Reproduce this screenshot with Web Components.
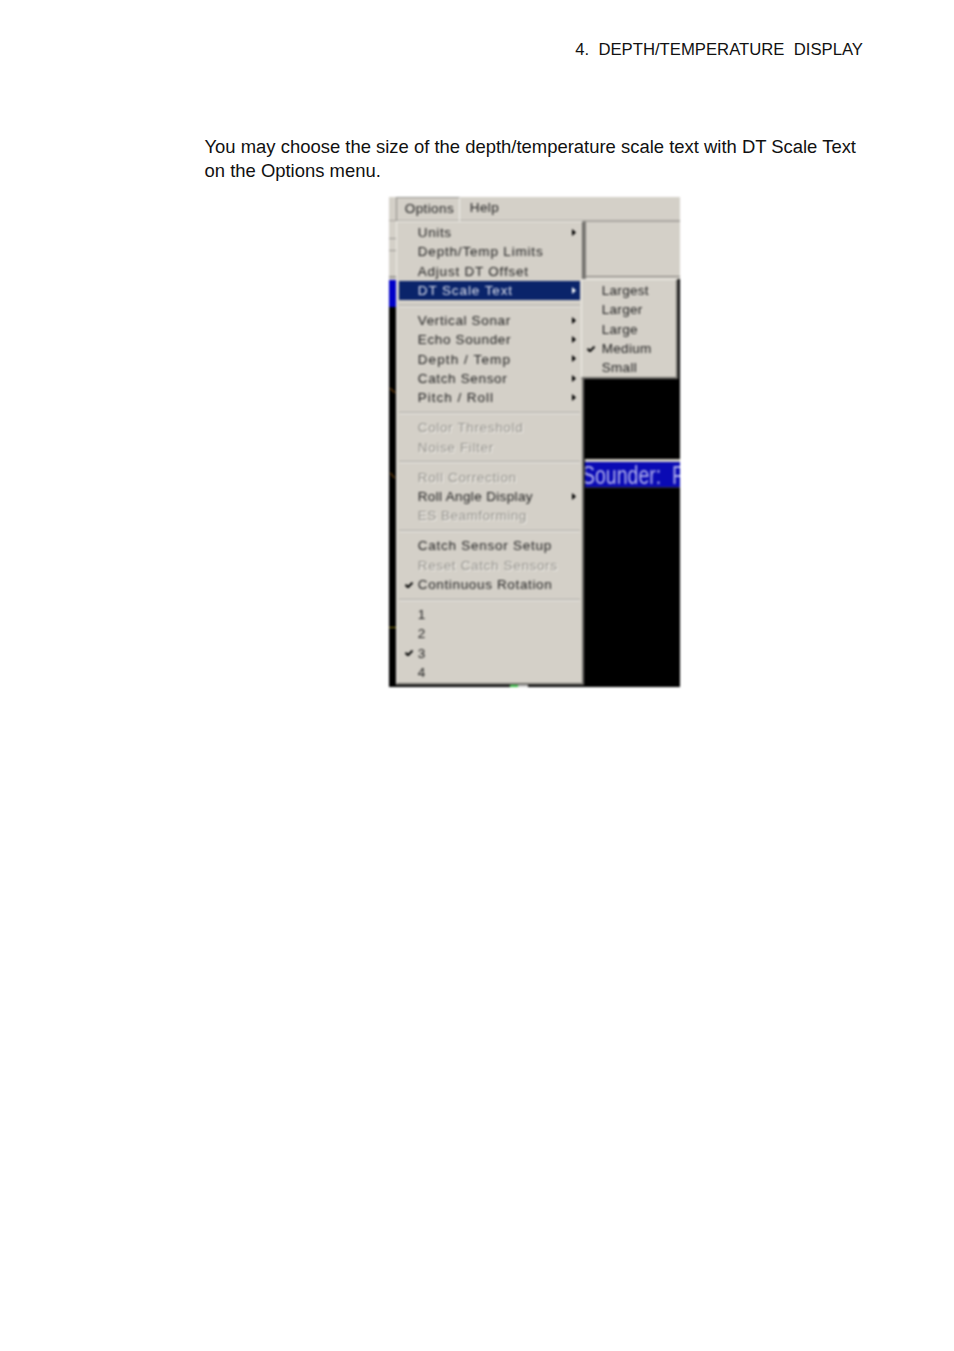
<!DOCTYPE html>
<html>
<head>
<meta charset="utf-8">
<title>Depth/Temperature Display</title>
<style>
  html, body { margin: 0; background: #fff; }
  body { font-family: "Liberation Sans", Arial, sans-serif; }
</style>
</head>
<body>
<manual-page heading="4.&#160;&#160;DEPTH/TEMPERATURE&#160;&#160;DISPLAY">
  You may choose the size of the depth/temperature scale text with DT Scale Text on the Options menu.
  <sonar-shot slot="figure">
    <menu-panel slot="main">
      <menu-item arrow>Units</menu-item>
      <menu-item style="--ls:.82px">Depth/Temp Limits</menu-item>
      <menu-item style="--ls:.78px">Adjust DT Offset</menu-item>
      <menu-item arrow active style="--ls:.9px">DT Scale Text</menu-item>
      <menu-sep></menu-sep>
      <menu-item arrow>Vertical Sonar</menu-item>
      <menu-item arrow>Echo Sounder</menu-item>
      <menu-item arrow style="--ls:1.1px">Depth / Temp</menu-item>
      <menu-item arrow>Catch Sensor</menu-item>
      <menu-item arrow style="--ls:.98px">Pitch / Roll</menu-item>
      <menu-sep></menu-sep>
      <menu-item disabled>Color Threshold</menu-item>
      <menu-item disabled>Noise Filter</menu-item>
      <menu-sep></menu-sep>
      <menu-item disabled>Roll Correction</menu-item>
      <menu-item arrow style="--ls:.35px">Roll Angle Display</menu-item>
      <menu-item disabled style="--ls:.5px">ES Beamforming</menu-item>
      <menu-sep></menu-sep>
      <menu-item style="--ls:.75px">Catch Sensor Setup</menu-item>
      <menu-item disabled>Reset Catch Sensors</menu-item>
      <menu-item checked>Continuous Rotation</menu-item>
      <menu-sep></menu-sep>
      <menu-item>1</menu-item>
      <menu-item>2</menu-item>
      <menu-item checked>3</menu-item>
      <menu-item>4</menu-item>
    </menu-panel>
    <menu-panel slot="sub">
      <menu-item>Largest</menu-item>
      <menu-item>Larger</menu-item>
      <menu-item>Large</menu-item>
      <menu-item checked>Medium</menu-item>
      <menu-item>Small</menu-item>
    </menu-panel>
  </sonar-shot>
</manual-page>

<script>
// Page frame: running head, paragraph, then the figure
class ManualPage extends HTMLElement {
  constructor() {
    super();
    this.attachShadow({ mode: 'open' });
    this.shadowRoot.innerHTML = `
      <style>
        :host {
          display: block;
          width: 954px;
          height: 1351px;
          box-sizing: border-box;
          padding: 40px 91px 0 204.5px;
          font-family: "Liberation Sans", Arial, sans-serif;
          color: #111;
        }
        .head { text-align: right; font-size: 16.7px; line-height: 19px; height: 95px; }
        .text { font-size: 18.44px; line-height: 24px; }
        .figure { display: flex; justify-content: center; margin-top: 14px; padding-left: 1px; }
      </style>
      <div class="head" id="head"></div>
      <div class="text"><slot></slot></div>
      <div class="figure"><slot name="figure"></slot></div>
    `;
  }

  connectedCallback() {
    this.shadowRoot.getElementById('head').textContent = this.getAttribute('heading') || '';
  }
}

// The captured program window, menus float over it
class SonarShot extends HTMLElement {
  constructor() {
    super();
    this.attachShadow({ mode: 'open' });
    this.shadowRoot.innerHTML = `
      <style>
        :host {
          display: block;
          position: relative;
          width: 291px;
          height: 490px;
          overflow: hidden;
          background: #000;
          filter: blur(0.8px);
          font-family: "Liberation Sans", Arial, sans-serif;
        }
        .bar {
          height: 24px;
          box-sizing: border-box;
          background: #d4d0c8;
          border-bottom: 1px solid #a9a6a0;
          display: flex;
          padding-left: 7px;
          font-size: 13.5px;
          letter-spacing: .4px;
          color: #222;
        }
        .tab { padding: 3px 6px 0 8px; height: 24px; box-sizing: border-box; }
        .tab.open {
          width: 64px;
          border: 1px solid #8f8d88;
          border-right-color: #f2f0ec;
          border-bottom: 0;
        }
        .tab.help { padding-left: 10px; }
        .tools {
          position: absolute; left: 195px; top: 24px; width: 96px; height: 58px;
          box-sizing: border-box; background: #d4d0c8;
          border-left: 2px solid #7f7d79;
          border-top: 1px solid #a9a6a0;
        }
        .tools::after {
          content: ""; position: absolute; left: 0; right: 0; top: 54px; height: 1px; background: #7f7d79;
        }
        .left { position: absolute; left: 0; top: 24px; width: 8px; height: 59px; background: #d4d0c8; }
        .left i { position: absolute; left: 0; width: 8px; height: 1px; background: #9c9a95; }
        .blue-l { position: absolute; left: 0; top: 83px; width: 8px; height: 27px; background: #0000c8; }
        .title {
          position: absolute; left: 196px; top: 262px; width: 95px; height: 29px;
          box-sizing: border-box; background: #0a0ab4;
          border-top: 3px solid #d4d0c8; border-bottom: 1px solid #334;
          overflow: hidden; white-space: pre;
          color: #b4b4ee; font: 25px/26px "Liberation Sans", Arial, sans-serif;
        }
        .title span { display: inline-block; transform: scaleX(.78); transform-origin: left top; margin-left: -3px; }
        .mark { position: absolute; }
        ::slotted([slot="main"]) { position: absolute; left: 7px; top: 24px; width: 188px; height: 464px; --ls: .65px; --text: 19px; --check: 6px; }
        ::slotted([slot="sub"]) { position: absolute; left: 192px; top: 82px; width: 97px; height: 100px; --ls: .3px; --text: 18px; --check: 3px; }
      </style>
      <div class="bar">
        <div class="tab open">Options</div>
        <div class="tab help">Help</div>
      </div>
      <div class="left"><i style="top:17px"></i><i style="top:29px"></i><i style="top:55px;height:2px"></i></div>
      <div class="blue-l"></div>
      <div class="tools"></div>
      <div class="title"><span>Sounder:  F</span></div>
      <div class="mark" style="left:0;top:193px;width:7px;height:1px;background:#7a4a12;transform:rotate(40deg)"></div>
      <div class="mark" style="left:0;top:278px;width:7px;height:1px;background:#7a4a12;transform:rotate(50deg)"></div>
      <div class="mark" style="left:0;top:430px;width:7px;height:1px;background:#8a7a10"></div>
      <div class="mark" style="left:121px;top:488px;width:8px;height:2px;background:#2fbf3f"></div>
      <div class="mark" style="left:129px;top:488px;width:10px;height:2px;background:#c8c8c8"></div>
      <slot name="main"></slot>
      <slot name="sub"></slot>
    `;
  }
}

// Raised grey popup holding the rows
class MenuPanel extends HTMLElement {
  constructor() {
    super();
    this.attachShadow({ mode: 'open' });
    this.shadowRoot.innerHTML = `
      <style>
        :host {
          display: block;
          box-sizing: border-box;
          padding: .7px 2px 0 2px;
          background: #d4d0c8;
          border: 1px solid #f1efea;
          border-right: 2px solid #6f6d69;
          border-bottom: 2px solid #6f6d69;
        }
      </style>
      <slot></slot>
    `;
  }
}

// One menu row: optional check on the left, optional arrow on the right
class MenuItem extends HTMLElement {
  constructor() {
    super();
    this.attachShadow({ mode: 'open' });
    this.shadowRoot.innerHTML = `
      <style>
        :host {
          display: flex;
          align-items: center;
          position: relative;
          height: 19.33px;
          padding-left: var(--text, 18px);
          font-size: 13.5px;
          letter-spacing: var(--ls, .35px);
          white-space: nowrap;
          color: #222;
        }
        :host([active]) { background: #0a246a; color: #e2e5f0; }
        :host([disabled]) { color: #94928c; text-shadow: 1px 1px 0 #f4f2ee; }
        svg { position: absolute; display: none; }
        .check { left: var(--check, 5px); top: 7px; width: 8px; height: 6px; }
        .arrow { right: 4px; top: 6px; width: 4px; height: 7px; }
        :host([checked]) .check, :host([arrow]) .arrow { display: block; }
        :host([active]) .arrow path { fill: #fff; }
      </style>
      <svg class="check" viewBox="0 0 8 6"><path d="M.5 2.8 L3 5.2 L7.6 .6" fill="none" stroke="#000" stroke-width="2"/></svg>
      <slot></slot>
      <svg class="arrow" viewBox="0 0 4 7"><path d="M0 0 L4 3.5 L0 7 Z" fill="#000"/></svg>
    `;
  }
}

class MenuSep extends HTMLElement {
  constructor() {
    super();
    this.attachShadow({ mode: 'open' });
    this.shadowRoot.innerHTML = `
      <style>
        :host { display: block; height: 10.7px; box-sizing: border-box; padding-top: 4.5px; }
        div { height: 1px; background: #a9a6a0; border-bottom: 1px solid #efede8; }
      </style>
      <div></div>
    `;
  }
}

customElements.define('manual-page', ManualPage);
customElements.define('sonar-shot', SonarShot);
customElements.define('menu-panel', MenuPanel);
customElements.define('menu-item', MenuItem);
customElements.define('menu-sep', MenuSep);
</script>
</body>
</html>
